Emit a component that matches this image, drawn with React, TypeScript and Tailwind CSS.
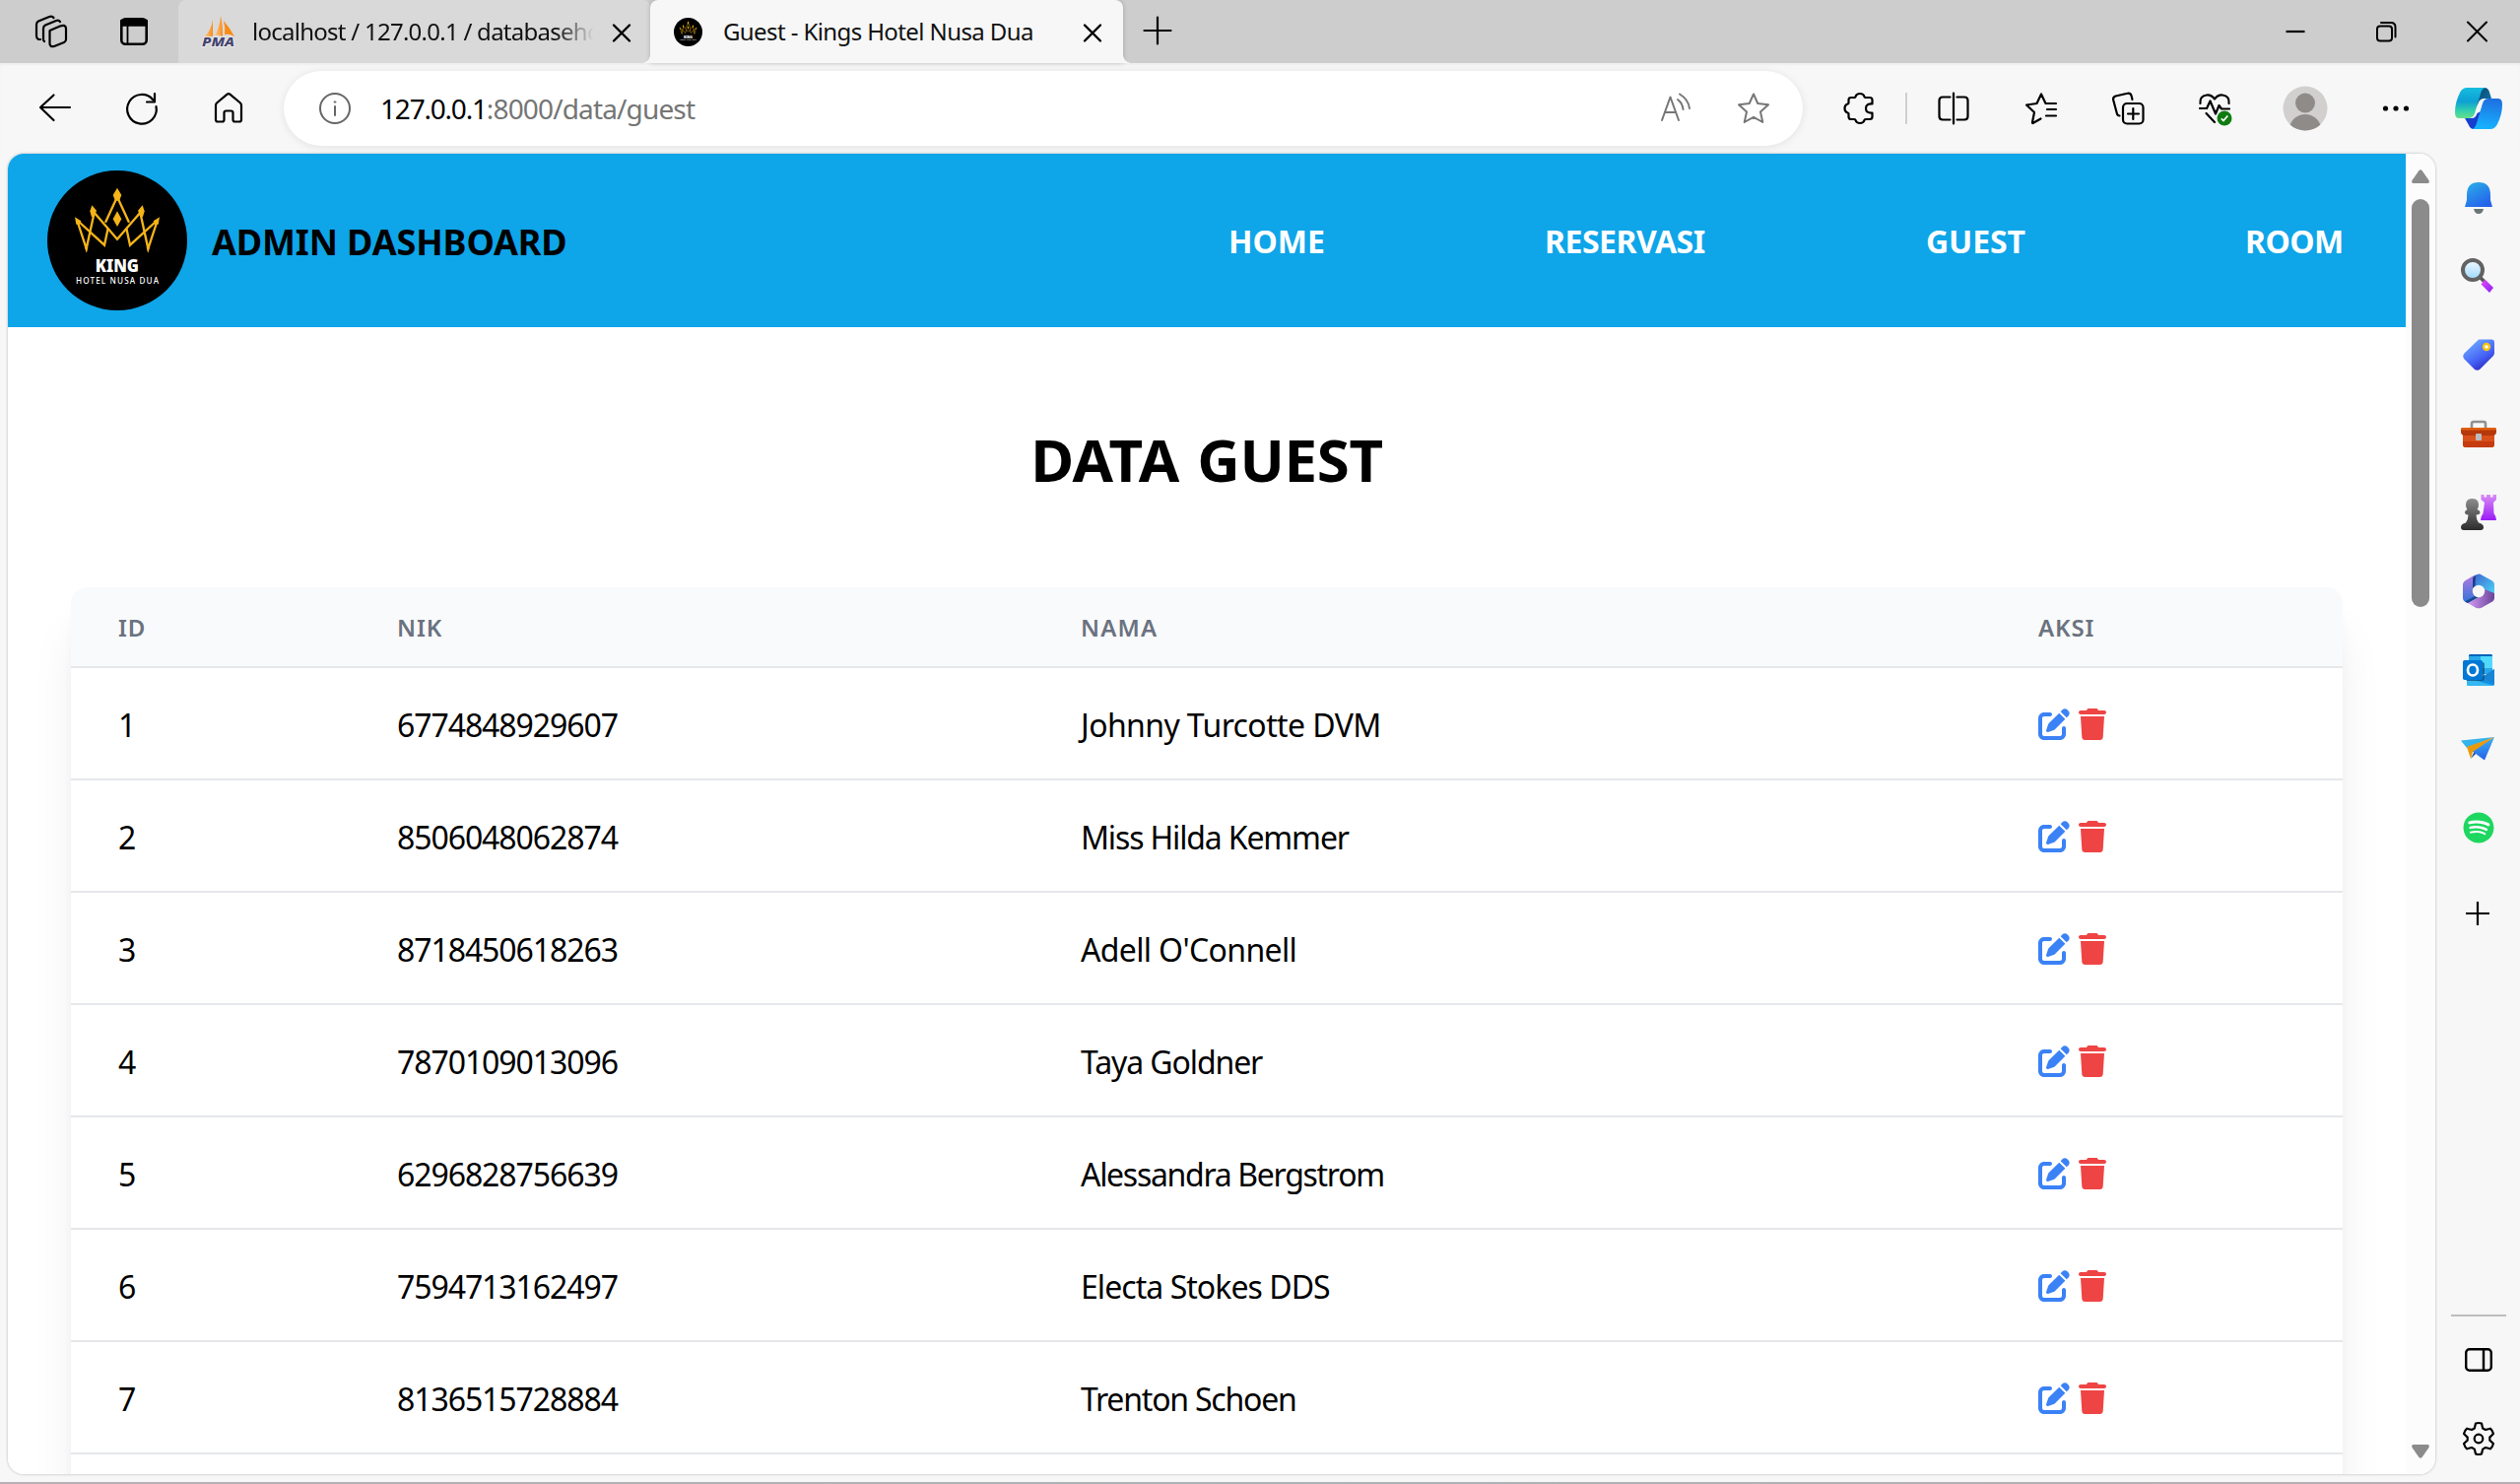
import React from 'react';
import { FaPenToSquare, FaTrash, FaSpotify } from 'react-icons/fa6';

const guests = [
  { id: 1, nik: '6774848929607', name: 'Johnny Turcotte DVM', tracking: 'tracking-[-0.6px]' },
  { id: 2, nik: '8506048062874', name: 'Miss Hilda Kemmer', tracking: 'tracking-[-1.15px]' },
  { id: 3, nik: '8718450618263', name: "Adell O'Connell", tracking: 'tracking-[-0.65px]' },
  { id: 4, nik: '7870109013096', name: 'Taya Goldner', tracking: 'tracking-[-1.1px]' },
  { id: 5, nik: '6296828756639', name: 'Alessandra Bergstrom', tracking: 'tracking-[-1.3px]' },
  { id: 6, nik: '7594713162497', name: 'Electa Stokes DDS', tracking: 'tracking-[-0.95px]' },
  { id: 7, nik: '8136515728884', name: 'Trenton Schoen', tracking: 'tracking-[-1.2px]' },
];

function Icon({
  children,
  className = 'text-black',
  width = 2.2,
}: {
  children: React.ReactNode;
  className?: string;
  width?: number;
}) {
  return (
    <svg
      viewBox="0 0 32 32"
      fill="none"
      stroke="currentColor"
      strokeWidth={width}
      strokeLinecap="round"
      strokeLinejoin="round"
      className={`size-8 shrink-0 overflow-visible ${className}`}
    >
      {children}
    </svg>
  );
}

function Slot({ children, className = 'w-[88px]' }: { children: React.ReactNode; className?: string }) {
  return <div className={`flex shrink-0 items-center justify-center ${className}`}>{children}</div>;
}

function KingLogo({ className }: { className: string }) {
  return (
    <svg viewBox="24 24 426 426" className={`shrink-0 ${className}`}>
      <circle cx="237" cy="237" r="213" fill="#000" />
      <g fill="none" stroke="#f5b418" strokeWidth="7">
        <path d="M116 180 L143 262 L167 152 L237 233 L307 152 L331 262 L358 180" />
        <path d="M120 180 L198 251 L209 200 M201 182 L237 104 L273 182 M265 200 L276 251 L354 180" />
      </g>
      <g fill="#f5b418">
        <path d="M237 77 L250 99 L243 116 H231 L224 99Z" />
        <path d="M160 130 L174 146 L168 162 L159 166 L154 148Z" />
        <path d="M314 130 L300 146 L306 162 L315 166 L320 148Z" />
        <path d="M108 166 L127 178 L122 188 L112 188Z" />
        <path d="M366 166 L347 178 L352 188 L362 188Z" />
        <path d="M237 148 L250 172 L237 195 L224 172Z" />
        <path d="M138 258 H148 L143 274Z M326 258 H336 L331 274Z" />
      </g>
      <text x="170" y="333" textLength="133" lengthAdjust="spacingAndGlyphs" fontFamily="Noto Sans, sans-serif" fontWeight="900" fontSize="50" fill="#fff">
        KING
      </text>
      <text x="111" y="368" textLength="252" lengthAdjust="spacing" fontFamily="Noto Sans, sans-serif" fontWeight="500" fontSize="24.500" fill="#fff">
        HOTEL NUSA DUA
      </text>
    </svg>
  );
}

function PmaIcon() {
  return (
    <svg viewBox="0 0 34 32" className="h-8 w-[34px] shrink-0 overflow-visible">
      <defs>
        <linearGradient id="sail" x1="0" y1="0" x2="1" y2="0">
          <stop offset="0" stopColor="#fdc98c" />
          <stop offset="1" stopColor="#f98b17" />
        </linearGradient>
      </defs>
      <path d="M11 4 Q10 14 2 22 Q7 20 11 21Z" fill="url(#sail)" />
      <path d="M19 0 Q18 12 13 20 Q17 19 21 21 Q21 8 19 0Z" fill="url(#sail)" />
      <path d="M22 5 Q24 12 23 19 Q28 18 33 21 Q28 12 22 5Z" fill="#f98b17" />
      <text x="0" y="31" textLength="33" lengthAdjust="spacingAndGlyphs" fontFamily="Noto Sans, sans-serif" fontWeight="800" fontStyle="italic" fontSize="12.5" fill="#45436f" stroke="#ececec" strokeWidth="1.6" paintOrder="stroke">
        PMA
      </text>
    </svg>
  );
}

function CloseIcon() {
  return (
    <Icon className="text-black" width={2.4}>
      <path d="M8 8.500 L24 24.500 M24 8.500 L8 24.500" />
    </Icon>
  );
}

function TabStrip() {
  return (
    <div className="flex h-16 shrink-0 bg-[#cdcdcd] pl-2.5">
      <Slot className="w-[84px]">
        <Icon>
          <path d="M14.500 15 L25 10.500 Q31 8.500 31 13 V24 Q31 26 29 27 L19 31 Q14.500 32 14.500 28Z" />
          <path d="M9 26 Q8 25.500 8 24 V13 Q8 10.500 10 9.500 L21 5 Q23.500 4 25 6" />
          <path d="M5 24 H3 Q1 23 1 20.500 V9 Q1 6.500 3 5.500 L14 1 Q17 0 18.500 2" />
        </Icon>
      </Slot>
      <Slot className="w-[84px]">
        <Icon width={2.6}>
          <rect x="3.300" y="3.300" width="25.400" height="25.400" rx="4" />
          <path d="M3.300 5 H28.700 V9.500 H3.300Z" fill="currentColor" />
          <path d="M9.500 10 V28" strokeWidth="1.800" />
        </Icon>
      </Slot>
      <div className="ml-[3px] flex w-[479px] shrink-0 items-center rounded-t-lg bg-[#d9d9d9] pl-6 text-[24px] leading-none text-[#111]">
        <PmaIcon />
        <div className="ml-[17px] w-[350px] overflow-hidden whitespace-nowrap leading-8 tracking-[-0.74px] [mask-image:linear-gradient(to_right,black_88%,transparent_99%)]">
          localhost / 127.0.0.1 / databaseho
        </div>
        <div className="ml-[9px] pt-0.5">
          <CloseIcon />
        </div>
      </div>
      <div className="relative flex w-[480px] shrink-0 items-center rounded-t-lg bg-[#f7f7f7] pl-6 text-[24px] text-[#111] shadow-[0_0_5px_rgba(0,0,0,0.2)]">
        <span className="absolute bottom-0 -left-2 size-2 bg-[radial-gradient(circle_at_0_0,transparent_7.5px,#f7f7f7_8px)]" />
        <span className="absolute -right-2 bottom-0 size-2 bg-[radial-gradient(circle_at_100%_0,transparent_7.5px,#f7f7f7_8px)]" />
        <KingLogo className="size-[29px]" />
        <div className="ml-[21px] w-[360px] whitespace-nowrap leading-8 tracking-[-0.6px]">
          Guest - Kings Hotel Nusa Dua
        </div>
        <div className="-ml-px pt-0.5">
          <CloseIcon />
        </div>
      </div>
      <div className="ml-[19px] flex items-center pb-[2px]">
        <Icon>
          <path d="M16 2.500 V29.500 M2.500 16 H29.500" />
        </Icon>
      </div>
      <div className="ml-auto flex">
        <Slot className="w-[92px]">
          <Icon>
            <path d="M6.500 16 H25.500" strokeLinecap="butt" />
          </Icon>
        </Slot>
        <Slot className="w-[92px]">
          <Icon width={2}>
            <rect x="7" y="10.500" width="15" height="15" rx="3" />
            <path d="M11 7 H21 Q25.500 7 25.500 11.500 V21.500" />
          </Icon>
        </Slot>
        <Slot className="w-[90px]">
          <Icon width={2}>
            <path d="M8 6.500 L27 25.500 M27 6.500 L8 25.500" />
          </Icon>
        </Slot>
      </div>
    </div>
  );
}

function Toolbar() {
  return (
    <div className="flex h-[92px] shrink-0 items-center bg-[#f7f7f7] pl-3 shadow-[inset_0_2px_2px_rgba(0,0,0,0.04)]">
      <Slot>
        <Icon>
          <path d="M14.500 2.500 L1 15 L14.500 28 M1.500 15 H31" />
        </Icon>
      </Slot>
      <Slot>
        <Icon>
          <path d="M30.500 14 A14.800 14.800 0 1 1 27.500 7.500" />
          <path d="M29 1 V9.500 H21" />
        </Icon>
      </Slot>
      <Slot>
        <Icon>
          <path d="M3 13 Q3 11.500 4 10.500 L14.300 1.800 Q16 0.500 17.700 1.800 L28 10.500 Q29 11.500 29 13 V27.500 Q29 29.500 27 29.500 H22.500 Q20.500 29.500 20.500 27.500 V20.500 Q20.500 18.500 18.500 18.500 H13.500 Q11.500 18.500 11.500 20.500 V27.500 Q11.500 29.500 9.500 29.500 H5 Q3 29.500 3 27.500Z" />
        </Icon>
      </Slot>
      <div className="ml-3 flex h-[76px] w-[1542px] shrink-0 items-center rounded-full bg-white pr-[34px] pl-9 shadow-[0_1px_8px_rgba(0,0,0,0.09)]">
        <Icon className="text-[#666]" width={2}>
          <circle cx="16" cy="16" r="15" />
          <path d="M16 14 V23" />
          <circle cx="16" cy="9.500" r="0.800" fill="currentColor" stroke="currentColor" strokeWidth="1" />
        </Icon>
        <div className="ml-[30px] flex whitespace-nowrap text-[28px] leading-10 text-[#757575]">
          <span className="tracking-[-1.2px] text-black">127.0.0.1</span>
          <span className="tracking-[-0.85px]">:8000/data/guest</span>
        </div>
        <div className="ml-auto flex gap-[46px]">
          <Icon className="text-[#767676]" width={2}>
            <path d="M1 28 L9.500 4.500 L18 28 M4.500 20 H15" />
            <path d="M17 7 Q22 11 22.500 17 M19 1.500 Q28 7 29 16" />
          </Icon>
          <Icon className="text-[#767676]" width={2}>
            <path d="M16 1.500 L20.300 11 L31 12.300 L23 19.500 L25.300 30 L16 24.800 L6.700 30 L9 19.500 L1 12.300 L11.700 11Z" />
          </Icon>
        </div>
      </div>
      <Slot className="ml-[13px] w-[88px]">
        <Icon>
          <path d="M10.500 5 Q12.500 5 12.500 4 Q13.500 1 17 1 Q20.500 1 21.500 4 Q21.500 5 23.500 5 H27 Q29.500 5 29.500 7.500 V11.500 Q23 11 23 16 Q23 21 29.500 20.500 V24.500 Q29.500 27 27 27 H23 Q21.500 27 21.500 28 Q20.500 31 17 31 Q13.500 31 12.500 28 Q12.500 27 11 27 H8 Q5.500 27 5.500 24.500 V21.500 Q5.500 20.500 4.500 20.500 Q1.500 19.500 1.500 16 Q1.500 12.500 4.500 11.500 Q5.500 11.500 5.500 10.500 V7.500 Q5.500 5 8 5Z" />
        </Icon>
      </Slot>
      <div className="mx-[3px] h-8 w-0.5 shrink-0 bg-[#cfcfcf]" />
      <Slot>
        <Icon>
          <path d="M16 0.500 V31.500 M12.500 4.500 H5 Q1.500 4.500 1.500 8 V24 Q1.500 27.500 5 27.500 H12.500 M19.500 4.500 H27 Q30.500 4.500 30.500 8 V24 Q30.500 27.500 27 27.500 H19.500" />
        </Icon>
      </Slot>
      <Slot className="ml-px w-[88px]">
        <Icon>
          <path d="M31 11 H20.500 L16 1.500 L11.500 11 L1 12.500 L9 20 L7 30 Q6.700 31.500 8 30.800 L15.500 26.500 M22 17 H31 M21 23.500 H31" />
        </Icon>
      </Slot>
      <Slot>
        <Icon>
          <rect x="11" y="11" width="20.500" height="20.500" rx="4" />
          <path d="M21.300 16 V27 M16 21.500 H27 M7.500 23.500 Q5.500 23.500 4.800 21 L1.200 7.500 Q0.500 4.500 3.500 3.500 L15.500 0.800 Q18.500 0 19.500 3 L20.500 7" />
        </Icon>
      </Slot>
      <Slot>
        <div className="relative size-8">
          <Icon>
            <path d="M1.500 11 Q0.500 3.500 8 2.500 Q12.500 2 16 6.500 Q19.500 2 24 2.500 Q31.500 3.500 30.500 11" />
            <path d="M1 16 H8 L11.500 8.500 L17 21.500 L20.500 13 L23 16.500 H31 M7.500 21 L16 30" />
          </Icon>
          <svg viewBox="0 0 16 16" className="absolute left-[18px] top-[18px] size-4">
            <circle cx="8" cy="8" r="7.500" fill="#107c10" />
            <path d="M4.800 8.300 L7 10.600 L11.300 5.500" fill="none" stroke="#fff" strokeWidth="1.700" />
          </svg>
        </div>
      </Slot>
      <Slot className="w-24">
        <svg viewBox="0 0 46 46" className="size-[46px]">
          <defs>
            <clipPath id="avatar">
              <circle cx="23" cy="23" r="22.500" />
            </clipPath>
          </defs>
          <g clipPath="url(#avatar)">
            <rect width="46" height="46" fill="#d2d0ce" />
            <circle cx="23" cy="17.500" r="10" fill="#8f8b88" />
            <circle cx="23" cy="45.500" r="16.500" fill="#8f8b88" />
          </g>
        </svg>
      </Slot>
      <Slot>
        <Icon>
          <g fill="currentColor" stroke="none">
            <circle cx="5.500" cy="16" r="2.600" />
            <circle cx="16" cy="16" r="2.600" />
            <circle cx="26.500" cy="16" r="2.600" />
          </g>
        </Icon>
      </Slot>
      <Slot className="w-20">
        <svg viewBox="0 0 48 42" className="h-[42px] w-12">
          <defs>
            <linearGradient id="cpA" x1="0" y1="0" x2="0" y2="1">
              <stop offset="0" stopColor="#16bde0" />
              <stop offset="0.450" stopColor="#0d9fd3" />
              <stop offset="0.750" stopColor="#33cfae" />
              <stop offset="1" stopColor="#66df8a" />
            </linearGradient>
            <linearGradient id="cpB" x1="0.500" y1="0" x2="0.400" y2="1">
              <stop offset="0" stopColor="#1f6fe0" />
              <stop offset="1" stopColor="#16b4ff" />
            </linearGradient>
            <linearGradient id="cpC" x1="0" y1="0" x2="1" y2="1">
              <stop offset="0" stopColor="#0a3f6b" />
              <stop offset="1" stopColor="#0e7faf" />
            </linearGradient>
          </defs>
          <path d="M24 0 H30 Q33.500 0 34.800 4 L37 11 H30 Q25 11 23.500 16 L20 22Z" fill="url(#cpC)" />
          <path d="M10 31 H17 Q21 31 22.500 26 L26 24 L21 42 H19 Q15.500 42 14 38Z" fill="#163fce" />
          <path d="M12 0 H31 Q27.500 0.500 26 6 L20 26 Q18.500 31 14 31 H4 Q0 31 0 25 Q0 15 5 5 Q7.500 0 12 0Z" fill="url(#cpA)" />
          <path d="M36 42 H17 Q20.500 41.500 22 36 L28 16 Q29.500 11 34 11 H44 Q48 11 48 17 Q48 27 43 37 Q40.500 42 36 42Z" fill="url(#cpB)" />
        </svg>
      </Slot>
    </div>
  );
}

const sideIcons: React.ReactNode[] = [
  <svg key="bell" viewBox="0 0 36 36" className="size-9">
    <defs>
      <linearGradient id="bell" x1="0" y1="0" x2="0.600" y2="1">
        <stop offset="0" stopColor="#2bb3e8" />
        <stop offset="1" stopColor="#2563eb" />
      </linearGradient>
    </defs>
    <path d="M13 30 H23 Q22 35 18 35 Q14 35 13 30Z" fill="#6b7478" />
    <path d="M18 3 Q30 3 30 16 V21 L32 28 H4 L6 21 V16 Q6 3 18 3Z" fill="url(#bell)" />
  </svg>,
  <svg key="search" viewBox="0 0 36 36" className="size-9">
    <defs>
      <linearGradient id="lens" x1="0" y1="0" x2="0" y2="1">
        <stop offset="0" stopColor="#f2faff" />
        <stop offset="1" stopColor="#9ad7ff" />
      </linearGradient>
      <linearGradient id="grip" x1="0" y1="0" x2="1" y2="1">
        <stop offset="0" stopColor="#e54df5" />
        <stop offset="1" stopColor="#8b1cf5" />
      </linearGradient>
    </defs>
    <path d="M20 20 L24 24" stroke="#555" strokeWidth="3.500" />
    <circle cx="12" cy="12" r="10" fill="url(#lens)" stroke="#626262" strokeWidth="4" />
    <path d="M24.500 21.500 L33 30 L29 35 L20.500 26.500Z" fill="url(#grip)" />
  </svg>,
  <svg key="tag" viewBox="0 0 32 32" className="size-8">
    <defs>
      <linearGradient id="tag" x1="0.200" y1="0.100" x2="0.700" y2="0.900">
        <stop offset="0" stopColor="#6da6ff" />
        <stop offset="0.650" stopColor="#4462f5" />
        <stop offset="1" stopColor="#3030c8" />
      </linearGradient>
    </defs>
    <path d="M16 0.500 H29 Q32 0.500 32 3.500 V14 Q32 16 30.500 17.500 L17.500 30.500 Q14.500 33 11.500 30.500 L1.500 20.500 Q-1 17.500 1.500 14.500Z" fill="url(#tag)" />
    <circle cx="24" cy="8" r="3" fill="#fff" stroke="#fbc412" strokeWidth="2.400" />
  </svg>,
  <svg key="toolbox" viewBox="0 0 36 36" className="size-9">
    <path d="M11 12 V8 Q11 6 13 6 H23 Q25 6 25 8 V12" fill="none" stroke="#909090" strokeWidth="2.600" />
    <path d="M2 17 H34 V29 Q34 32 31 32 H5 Q2 32 2 29Z" fill="#d9511a" />
    <path d="M2 26 H34 V29 Q34 32 31 32 H5 Q2 32 2 29Z" fill="#c43c0f" />
    <path d="M2 12 H34 Q36 12 36 14 V16 Q36 20 32 20 H4 Q0 20 0 16 V14 Q0 12 2 12Z" fill="#b5380b" />
    <path d="M2 12 H34 Q36 12 36 14.500 H0 Q0 12 2 12Z" fill="#e0600d" />
    <rect x="15" y="18" width="6" height="7" rx="1" fill="#b9bcc0" />
  </svg>,
  <svg key="chess" viewBox="0 0 36 36" className="size-9">
    <defs>
      <linearGradient id="rook" x1="0" y1="0" x2="0" y2="1">
        <stop offset="0" stopColor="#d98cf7" />
        <stop offset="1" stopColor="#9a1cf5" />
      </linearGradient>
      <linearGradient id="pawn" x1="0" y1="0" x2="0" y2="1">
        <stop offset="0" stopColor="#8d8d8d" />
        <stop offset="1" stopColor="#2b2b2b" />
      </linearGradient>
    </defs>
    <path d="M20.500 0 H23.500 V2.500 H26 V0 H30 V2.500 H32.500 V0 H36 V5 L33 8 L33.500 19 Q36 22 36 26 H20 Q20 22 22.500 19 L24 8 L20.500 5Z" fill="url(#rook)" />
    <path d="M11.500 4 Q18 4 18 10.500 Q18 13 16.500 15 Q19.500 16 19.500 18 Q19.500 20 15.500 20.500 Q15.500 25 18 28.500 Q23 29.500 23 33 Q23 36 20 36 H3 Q0 36 0 33 Q0 29.500 5 28.500 Q7.500 25 7.500 20.500 Q4 20 4 18 Q4 16 6.500 15 Q5 13 5 10.500 Q5 4 11.500 4Z" fill="url(#pawn)" />
  </svg>,
  <svg key="m365" viewBox="0 0 32 36" className="h-9 w-8">
    <defs>
      <linearGradient id="m1" x1="0" y1="0" x2="0" y2="1">
        <stop offset="0" stopColor="#b07be0" />
        <stop offset="1" stopColor="#2f74d8" />
      </linearGradient>
      <linearGradient id="m2" x1="0" y1="0" x2="1" y2="1">
        <stop offset="0" stopColor="#3c62cf" />
        <stop offset="1" stopColor="#4bd8f7" />
      </linearGradient>
      <linearGradient id="m3" x1="0" y1="0" x2="1" y2="0">
        <stop offset="0" stopColor="#d49bf5" />
        <stop offset="1" stopColor="#6a4398" />
      </linearGradient>
    </defs>
    <path d="M11 2 L2 7.500 Q0 9 0 11 V25 Q0 27 2 28.500 L5 30 L15 24 L10 18 V6Z" fill="url(#m1)" />
    <path d="M16 0.500 Q18 0.500 19 1.500 L30 7.500 Q32 9 32 11 V22 L21 16 L16 12 L10 15 V5 Q10 3 13 1.500Z" fill="url(#m2)" />
    <path d="M10 5 Q10 3 13 1.500 L12.500 13 L10 15Z" fill="#1c3f8f" />
    <path d="M32 20 V25 Q32 27 30 28.500 L19 34.700 Q16 36 13 34.700 L5 30 L16 24 L22 16Z" fill="url(#m3)" />
    <path d="M5 30 L2 28.500 L12 23 L16 24Z" fill="#174a94" />
    <circle cx="16" cy="18" r="6.200" fill="#f7f7f7" />
  </svg>,
  <svg key="outlook" viewBox="0 0 32 32" className="size-8">
    <rect x="6" y="0" width="24" height="18" rx="1.500" fill="#28a8ea" />
    <path d="M6 2 V1.500 Q6 0 7.500 0 H28.500 Q30 0 30 1.500 V2Z" fill="#0364b8" />
    <path d="M18 2 H30 V14 H18Z" fill="#50d9ff" />
    <path d="M18 14 H30 V20 H18Z" fill="#28a8ea" />
    <path d="M4 16 L18 24 L32 15 V30 Q32 32 30 32 H6 Q4 32 4 30Z" fill="#1490df" />
    <path d="M4 24 L32 32 H6 Q4 32 4 30Z" fill="#35b8f1" />
    <path d="M32 15 L20 23 L32 31Z" fill="#1784d6" />
    <rect x="3" y="8" width="19" height="19" rx="2" fill="#0a4a74" opacity="0.700" />
    <rect x="0" y="6" width="20" height="20" rx="1.800" fill="#0078d4" />
    <ellipse cx="10" cy="16" rx="5" ry="5.500" fill="none" stroke="#fff" strokeWidth="2.700" />
  </svg>,
  <svg key="plane" viewBox="0 0 36 36" className="size-9">
    <defs>
      <linearGradient id="wing" x1="0.500" y1="0" x2="0.600" y2="1">
        <stop offset="0" stopColor="#3fb4f4" />
        <stop offset="1" stopColor="#2160e8" />
      </linearGradient>
    </defs>
    <path d="M0 9.500 L34 6 L6 17Z" fill="#35b3ec" />
    <path d="M10 28 L17 21 L14 20Z" fill="#1748a8" />
    <path d="M34 6 L24 29.500 L11 20Z" fill="url(#wing)" />
    <path d="M34 6 L6 16 L10 28 L12 21Z" fill="#e99a0c" />
  </svg>,
  <FaSpotify key="spotify" className="size-8 rounded-full bg-[radial-gradient(circle,white_60%,transparent_62%)] text-[#1ed760]" />,
];

function Sidebar() {
  return (
    <div className="flex w-[88px] shrink-0 flex-col items-center pt-1">
      {sideIcons.map((icon, i) => (
        <div key={i} className="flex h-20 w-9 shrink-0 items-center justify-center">
          {icon}
        </div>
      ))}
      <div className="mt-[31px] -ml-0.5">
        <Icon>
          <path d="M16 4 V28 M4 16 H28" strokeLinecap="butt" />
        </Icon>
      </div>
      <div className="mt-auto h-0.5 w-14 bg-[#bdbdbd]" />
      <div className="mt-7">
        <Icon width={2.4}>
          <rect x="3.200" y="5.200" width="25.600" height="21.600" rx="3.500" />
          <path d="M21 5.200 V26.800" />
        </Icon>
      </div>
      <div className="mt-12 mb-5">
        <Icon width={2.2}>
          <path d="M13 0.500 Q16 -0.500 19 0.500 L20.200 5.500 L23 7 L27.800 5.700 Q30 7.500 31 11 L27.300 14.600 V17.600 L31 21 Q30 24.500 27.800 26.300 L23 25 L20.200 26.600 L19 31.500 Q16 32.500 13 31.500 L11.800 26.600 L9 25 L4.200 26.300 Q2 24.500 1 21 L4.700 17.600 V14.600 L1 11 Q2 7.500 4.200 5.700 L9 7 L11.800 5.500Z" />
          <circle cx="16" cy="16" r="4.300" />
        </Icon>
      </div>
    </div>
  );
}

function GuestPage() {
  return (
    <div className="w-[2434px] shrink-0 overflow-hidden bg-white">
      <header className="flex h-[176px] items-center bg-[#0ea5e9] pr-16 pl-10">
        <KingLogo className="size-[142px]" />
        <div className="ml-[25px] pt-1 text-[36px] leading-10 font-bold tracking-[-0.12px] text-black">ADMIN DASHBOARD</div>
        <nav className="ml-auto flex gap-[224px] pt-0.5 text-[32px] leading-[48px] font-bold whitespace-nowrap text-white">
          <a className="w-[97px]">HOME</a>
          <a className="w-[163px] tracking-[-0.5px]">RESERVASI</a>
          <a className="w-[100px] tracking-[-0.1px]">GUEST</a>
          <a className="w-[99px] tracking-[-0.5px]">ROOM</a>
        </nav>
      </header>
      <h1 className="mt-[104px] text-center text-[60px] leading-none font-bold tracking-[-0.3px] text-black [word-spacing:3px]">
        DATA GUEST
      </h1>
      <div className="mt-[100px] ml-16 w-[2306px] rounded-t-2xl bg-white shadow-[0_40px_50px_-10px_rgba(0,0,0,0.1),0_16px_20px_-12px_rgba(0,0,0,0.1)]">
        <table className="w-full table-fixed border-separate border-spacing-0 text-left">
          <colgroup>
            <col className="w-[283px]" />
            <col className="w-[694px]" />
            <col className="w-[972px]" />
            <col className="w-[357px]" />
          </colgroup>
          <thead>
            <tr className="text-[24px] leading-8 tracking-[0.9px] text-[#6b7280]">
              <th className="h-20 rounded-tl-2xl bg-[#f9fafb] pt-0.5 pb-0 pl-12 font-semibold">ID</th>
              <th className="bg-[#f9fafb] pt-0.5 pb-0 pl-12 font-semibold">NIK</th>
              <th className="bg-[#f9fafb] pt-0.5 pb-0 pl-12 font-semibold tracking-[1.2px]">NAMA</th>
              <th className="rounded-tr-2xl bg-[#f9fafb] pt-0.5 pb-0 pl-12 font-semibold">AKSI</th>
            </tr>
          </thead>
          <tbody className="text-[32px] leading-[48px] text-black">
            {guests.map((g) => (
              <tr key={g.id}>
                <td className="h-[114px] border-t-2 border-[#e5e7eb] pt-[3px] pb-0 pl-12">{g.id}</td>
                <td className="border-t-2 border-[#e5e7eb] pt-[3px] pb-0 pl-12 tracking-[-1.08px]">{g.nik}</td>
                <td className={`border-t-2 border-[#e5e7eb] pt-[3px] pb-0 pl-12 ${g.tracking}`}>{g.name}</td>
                <td className="border-t-2 border-[#e5e7eb] py-0 pl-12">
                  <div className="flex gap-[9px] pt-0.5">
                    <FaPenToSquare className="size-8 text-[#3b82f6]" />
                    <FaTrash className="h-8 w-7 text-[#ef4444]" />
                  </div>
                </td>
              </tr>
            ))}
            <tr>
              <td colSpan={4} className="h-[114px] border-t-2 border-[#e5e7eb]" />
            </tr>
          </tbody>
        </table>
      </div>
    </div>
  );
}

function Scrollbar() {
  return (
    <div className="flex w-[30px] shrink-0 flex-col items-center bg-[#fcfcfc] py-4">
      <svg viewBox="0 0 18 14" className="h-3.5 w-[18px] shrink-0">
        <path d="M7.500 1 Q9 -0.500 10.500 1 L17.500 11 Q18.500 13.500 16.500 14 H1.500 Q-0.500 13.500 0.500 11Z" fill="#8b8b8b" />
      </svg>
      <div className="mt-4 h-[414px] w-[18px] shrink-0 rounded-full bg-[#8b8b8b]" />
      <svg viewBox="0 0 18 14" className="mt-auto h-3.5 w-[18px] shrink-0">
        <path d="M7.500 13 Q9 14.500 10.500 13 L17.500 3 Q18.500 0.500 16.500 0 H1.500 Q-0.500 0.500 0.500 3Z" fill="#8b8b8b" />
      </svg>
    </div>
  );
}

export default function App() {
  return (
    <div className="flex h-[1506px] w-[2558px] flex-col overflow-hidden bg-[#f7f7f7] font-['Noto_Sans',sans-serif]">
      <TabStrip />
      <Toolbar />
      <div className="flex h-[1340px] shrink-0 pl-2">
        <div className="flex w-[2464px] shrink-0 overflow-hidden rounded-2xl bg-white shadow-[0_0_3px_rgba(0,0,0,0.28)]">
          <GuestPage />
          <Scrollbar />
        </div>
        <Sidebar />
      </div>
      <div className="mt-2 h-0.5 shrink-0 bg-linear-to-r from-[#b9afb4] via-[#a9b3b5] to-[#b9adb3]" />
    </div>
  );
}
